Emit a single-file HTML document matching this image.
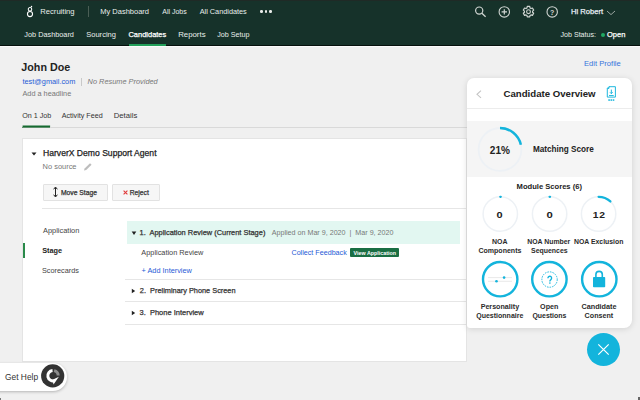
<!DOCTYPE html>
<html><head><meta charset="utf-8"><style>
html,body{margin:0;padding:0;width:640px;height:400px;overflow:hidden;background:#efefef}
body{position:relative;font-family:"Liberation Sans", sans-serif}
.t{position:absolute;white-space:nowrap;line-height:1}
.r{position:absolute;display:block}
</style></head><body>
<div class="r" style="left:0px;top:0px;width:640px;height:400px;background:#f0f0f0;"></div>
<div class="r" style="left:0px;top:0px;width:640px;height:45px;background:#16322a;"></div>
<div class="r" style="left:0px;top:0px;width:640px;height:1px;background:#1f2a26;"></div>
<div class="r" style="left:0px;top:45px;width:640px;height:1px;background:#06110d;"></div>
<div class="r" style="left:0px;top:46px;width:640px;height:1px;background:#fbfbfb;"></div>
<svg class="r" style="left:22px;top:3px" width="16" height="16" viewBox="22 3 16 16"><circle cx="30" cy="14.1" r="2.55" fill="none" stroke="#fff" stroke-width="1.1"/><circle cx="30" cy="9.3" r="1.75" fill="none" stroke="#fff" stroke-width="1.05"/><circle cx="31.5" cy="6.5" r="0.75" fill="#fff"/></svg>
<div class="t" id="t1" style="left:40.36px;top:7.91px;font-size:7.605px;font-weight:400;color:#e9eeeb;font-style:normal;letter-spacing:0px;">Recruiting</div>
<div class="r" style="left:88px;top:6px;width:1px;height:11px;background:#4a5e55;"></div>
<div class="t" id="t2" style="left:100.24px;top:8.01px;font-size:7.508px;font-weight:400;color:#e9eeeb;font-style:normal;letter-spacing:0px;">My Dashboard</div>
<div class="t" id="t3" style="left:162.23px;top:7.71px;font-size:6.997px;font-weight:400;color:#e9eeeb;font-style:normal;letter-spacing:0px;">All Jobs</div>
<div class="t" id="t4" style="left:199.70px;top:7.84px;font-size:7.311px;font-weight:400;color:#e9eeeb;font-style:normal;letter-spacing:0px;">All Candidates</div>
<div class="r" style="left:260.3px;top:10.3px;width:2.4px;height:2.4px;border-radius:50%;background:#e8ece9"></div>
<div class="r" style="left:264.8px;top:10.3px;width:2.4px;height:2.4px;border-radius:50%;background:#e8ece9"></div>
<div class="r" style="left:269.3px;top:10.3px;width:2.4px;height:2.4px;border-radius:50%;background:#e8ece9"></div>
<div class="t" id="t5" style="left:24.34px;top:30.62px;font-size:7.324px;font-weight:400;color:#e9eeeb;font-style:normal;letter-spacing:0px;">Job Dashboard</div>
<div class="t" id="t6" style="left:86.25px;top:30.61px;font-size:7.523px;font-weight:400;color:#e9eeeb;font-style:normal;letter-spacing:0px;">Sourcing</div>
<div class="t" id="t7" style="left:128.47px;top:30.66px;font-size:7.483px;font-weight:400;color:#ffffff;font-style:normal;letter-spacing:0px;-webkit-text-stroke:0.25px currentColor;">Candidates</div>
<div class="r" style="left:129px;top:44px;width:37px;height:2px;background:#22a05a;"></div>
<div class="t" id="t8" style="left:178.17px;top:30.52px;font-size:7.837px;font-weight:400;color:#e9eeeb;font-style:normal;letter-spacing:0px;">Reports</div>
<div class="t" id="t9" style="left:217.29px;top:31.65px;font-size:7.167px;font-weight:400;color:#e9eeeb;font-style:normal;letter-spacing:0px;">Job Setup</div>
<svg class="r" style="left:470px;top:2px" width="92" height="20" viewBox="470 2 92 20"><circle cx="479.2" cy="10.6" r="3.6" fill="none" stroke="#d0d5d2" stroke-width="1.2"/><path d="M481.9 13.3 L485.6 16.7" stroke="#d0d5d2" stroke-width="1.3"/><circle cx="504.3" cy="11.9" r="5.2" fill="none" stroke="#d0d5d2" stroke-width="1.1"/><path d="M504.3 9.2 V14.6 M501.6 11.9 H507" stroke="#d0d5d2" stroke-width="1.2"/><path d="M526.96 7.90 L527.29 6.44 L529.71 6.44 L530.04 7.90 L531.02 8.47 L532.45 8.02 L533.66 10.12 L532.56 11.13 L532.56 12.27 L533.66 13.28 L532.45 15.38 L531.02 14.93 L530.04 15.50 L529.71 16.96 L527.29 16.96 L526.96 15.50 L525.98 14.93 L524.55 15.38 L523.34 13.28 L524.44 12.27 L524.44 11.13 L523.34 10.12 L524.55 8.02 L525.98 8.47 Z" fill="none" stroke="#d0d5d2" stroke-width="1.2" stroke-linejoin="round"/><circle cx="528.5" cy="11.7" r="1.9" fill="none" stroke="#d0d5d2" stroke-width="1.1"/><circle cx="552.2" cy="11.9" r="5.2" fill="none" stroke="#d0d5d2" stroke-width="1.1"/><text x="552.2" y="14.6" text-anchor="middle" font-family="Liberation Sans" font-size="7" font-weight="700" fill="#d0d5d2">?</text></svg>
<div class="t" id="t10" style="left:571.10px;top:7.60px;font-size:7.576px;font-weight:400;color:#e6edf3;font-style:normal;letter-spacing:0px;-webkit-text-stroke:0.25px currentColor;">Hi Robert</div>
<svg class="r" style="left:606px;top:10px" width="10" height="6" viewBox="0 0 10 6"><path d="M1 1 L5 4.6 L9 1" fill="none" stroke="#9aa5a0" stroke-width="1"/></svg>
<div class="t" id="t11" style="left:560.48px;top:31.54px;font-size:7.119px;font-weight:400;color:#e9eeeb;font-style:normal;letter-spacing:0px;">Job Status:</div>
<div class="r" style="left:600.5px;top:32.6px;width:4px;height:4px;border-radius:50%;background:#1fa862"></div>
<div class="t" id="t12" style="left:607.06px;top:30.67px;font-size:7.499px;font-weight:400;color:#ffffff;font-style:normal;letter-spacing:0px;-webkit-text-stroke:0.25px currentColor;">Open</div>
<div class="t" id="t13" style="left:21.35px;top:62.03px;font-size:10.720px;font-weight:700;color:#222;font-style:normal;letter-spacing:0px;">John Doe</div>
<div class="t" id="t14" style="left:22.47px;top:77.67px;font-size:7.365px;font-weight:400;color:#1f5bd6;font-style:normal;letter-spacing:0px;">test@gmail.com</div>
<div class="r" style="left:81px;top:78px;width:1px;height:8px;background:#c9c9c9;"></div>
<div class="t" id="t15" style="left:87.60px;top:78.38px;font-size:7.393px;font-weight:400;color:#777;font-style:italic;letter-spacing:0px;">No Resume Provided</div>
<div class="t" id="t16" style="left:22.45px;top:90.06px;font-size:7.324px;font-weight:400;color:#777;font-style:normal;letter-spacing:0px;">Add a headline</div>
<div class="t" id="t17" style="left:22.26px;top:112.60px;font-size:7.172px;font-weight:400;color:#333;font-style:normal;letter-spacing:0px;">On 1 Job</div>
<div class="t" id="t18" style="left:61.70px;top:112.69px;font-size:7.167px;font-weight:400;color:#333;font-style:normal;letter-spacing:0px;">Activity Feed</div>
<div class="t" id="t19" style="left:113.77px;top:111.68px;font-size:7.695px;font-weight:400;color:#333;font-style:normal;letter-spacing:0px;">Details</div>
<div class="r" style="left:50px;top:127px;width:417px;height:1px;background:#d9d9d9;"></div>
<div class="r" style="left:22px;top:127px;width:28px;height:1px;background:#5d8f6b;"></div>
<svg class="r" style="left:20px;top:124px" width="34" height="4" viewBox="20 124 34 4"><rect x="22.6" y="125.5" width="27.5" height="1.5" fill="#156b30"/></svg>
<div class="t" id="t20" style="left:583.96px;top:59.58px;font-size:7.626px;font-weight:400;color:#3574dc;font-style:normal;letter-spacing:0px;">Edit Profile</div>
<div class="r" style="left:22px;top:138px;width:445px;height:224px;background:#ffffff;border:1px solid #e4e4e4;box-sizing:border-box"></div>
<svg class="r" style="left:31px;top:152px" width="6" height="4" viewBox="0 0 6 4"><path d="M0.5 0.5 H5.5 L3 3.5 Z" fill="#222"/></svg>
<div class="t" id="t21" style="left:43.04px;top:148.93px;font-size:8.587px;font-weight:400;color:#222;font-style:normal;letter-spacing:0px;-webkit-text-stroke:0.25px currentColor;">HarverX Demo Support Agent</div>
<div class="t" id="t22" style="left:42.61px;top:162.53px;font-size:7.451px;font-weight:400;color:#777;font-style:normal;letter-spacing:0px;">No source</div>
<svg class="r" style="left:82px;top:162px" width="11" height="10" viewBox="0 0 11 10"><path d="M2 8.5 L2.6 6.6 L8 1.3 L9.6 2.8 L4.2 8 Z" fill="#bdbdbd"/></svg>
<div class="r" style="left:43px;top:184px;width:65px;height:17px;background:#f6f6f6;border:1px solid #e2e2e2;box-sizing:border-box;border-radius:1px"></div>
<svg class="r" style="left:53px;top:186px" width="5" height="12" viewBox="0 0 5 12"><path d="M2.5 1.5 V10.5" stroke="#222" stroke-width="1"/><path d="M0.6 3.3 L2.5 1 L4.4 3.3 M0.6 8.7 L2.5 11 L4.4 8.7" fill="none" stroke="#222" stroke-width="1"/></svg>
<div class="t" id="t23" style="left:60.93px;top:189.90px;font-size:6.758px;font-weight:400;color:#333;font-style:normal;letter-spacing:0px;-webkit-text-stroke:0.25px currentColor;">Move Stage</div>
<div class="r" style="left:112px;top:184px;width:48px;height:17px;background:#f6f6f6;border:1px solid #e2e2e2;box-sizing:border-box;border-radius:1px"></div>
<svg class="r" style="left:122.5px;top:189.5px" width="5" height="5" viewBox="0 0 5 5"><path d="M0.6 0.6 L4.4 4.4 M4.4 0.6 L0.6 4.4" stroke="#e03b3b" stroke-width="1.1"/></svg>
<div class="t" id="t24" style="left:129.78px;top:189.95px;font-size:6.725px;font-weight:400;color:#333;font-style:normal;letter-spacing:0px;-webkit-text-stroke:0.25px currentColor;">Reject</div>
<div class="r" style="left:42px;top:208px;width:424px;height:1px;background:#e6e6e6;"></div>
<div class="t" id="t25" style="left:43.00px;top:226.81px;font-size:7.432px;font-weight:400;color:#444;font-style:normal;letter-spacing:0px;">Application</div>
<div class="r" style="left:23px;top:243px;width:1.6px;height:15px;background:#2a8a4a;"></div>
<div class="t" id="t26" style="left:42.24px;top:246.84px;font-size:7.329px;font-weight:700;color:#222;font-style:normal;letter-spacing:0px;">Stage</div>
<div class="t" id="t27" style="left:41.96px;top:266.58px;font-size:7.319px;font-weight:400;color:#444;font-style:normal;letter-spacing:0px;">Scorecards</div>
<div class="r" style="left:127px;top:221px;width:333px;height:23px;background:#e2f7f1;"></div>
<svg class="r" style="left:131px;top:231px" width="6" height="5" viewBox="0 0 6 5"><path d="M0.7 0.6 H5.3 L3 4 Z" fill="#222"/></svg>
<div class="t" id="t28" style="left:139.54px;top:228.95px;font-size:7.430px;font-weight:400;color:#333;font-style:normal;letter-spacing:0px;-webkit-text-stroke:0.25px currentColor;">1.&nbsp; Application Review (Current Stage)</div>
<div class="t" id="t29" style="left:271.72px;top:229.63px;font-size:7.155px;font-weight:400;color:#777;font-style:normal;letter-spacing:0px;">Applied on Mar 9, 2020 &nbsp;|&nbsp; Mar 9, 2020</div>
<div class="t" id="t30" style="left:141.35px;top:248.67px;font-size:7.354px;font-weight:400;color:#444;font-style:normal;letter-spacing:0px;">Application Review</div>
<div class="t" id="t31" style="left:141.56px;top:266.88px;font-size:7.342px;font-weight:400;color:#1f5bd6;font-style:normal;letter-spacing:0px;">+ Add Interview</div>
<div class="t" id="t32" style="left:291.48px;top:249.93px;font-size:7.160px;font-weight:400;color:#1f5bd6;font-style:normal;letter-spacing:0px;">Collect Feedback</div>
<div class="r" style="left:350px;top:248px;width:49px;height:9px;background:#1a6e43;border-radius:1px"></div>
<div class="t" id="t33" style="left:353.59px;top:250.65px;font-size:5.343px;font-weight:700;color:#ffffff;font-style:normal;letter-spacing:0px;">View Application</div>
<div class="r" style="left:125px;top:279px;width:341px;height:1px;background:#e6e6e6;"></div>
<svg class="r" style="left:131px;top:288px" width="5" height="6" viewBox="0 0 5 6"><path d="M0.8 0.7 V5.3 L4.2 3 Z" fill="#222"/></svg>
<div class="t" id="t34" style="left:139.83px;top:287.39px;font-size:7.370px;font-weight:400;color:#333;font-style:normal;letter-spacing:0px;-webkit-text-stroke:0.25px currentColor;">2.&nbsp; Preliminary Phone Screen</div>
<div class="r" style="left:125px;top:301px;width:341px;height:1px;background:#e6e6e6;"></div>
<svg class="r" style="left:131px;top:310px" width="5" height="6" viewBox="0 0 5 6"><path d="M0.8 0.7 V5.3 L4.2 3 Z" fill="#222"/></svg>
<div class="t" id="t35" style="left:139.55px;top:308.56px;font-size:7.495px;font-weight:400;color:#333;font-style:normal;letter-spacing:0px;-webkit-text-stroke:0.25px currentColor;">3.&nbsp; Phone Interview</div>
<div class="r" style="left:125px;top:324px;width:341px;height:1px;background:#e6e6e6;"></div>
<div class="r" style="left:-20px;top:362.5px;width:87px;height:28px;border-radius:14px;background:#fff;box-shadow:0 1px 3px rgba(0,0,0,.25)"></div>
<div class="t" id="t36" style="left:5.05px;top:372.57px;font-size:8.400px;font-weight:400;color:#333;font-style:normal;letter-spacing:0px;">Get Help</div>
<svg class="r" style="left:40px;top:363px" width="26" height="26" viewBox="0 0 26 26"><circle cx="12.7" cy="12.9" r="12.6" fill="#fff"/><circle cx="12.7" cy="12.9" r="11.6" fill="#333"/><path d="M12.55 7.52 A5.2 5.2 0 1 0 14.78 17.59" fill="none" stroke="#fff" stroke-width="3"/><path d="M14.08 7.61 A5.2 5.2 0 0 1 18.20 12.52" fill="none" stroke="#8c8c8c" stroke-width="3"/><path d="M18.9 13.8 L13.5 21.6 L12.6 16.8 Z" fill="#fff"/></svg>
<div class="r" style="left:467px;top:78px;width:165px;height:249.5px;border-radius:7px 7px 8px 3px;background:#fff;box-shadow:0 1px 6px rgba(0,0,0,.13)"></div>
<div class="r" style="left:467px;top:108px;width:165px;height:1px;background:#ececec;"></div>
<div class="r" style="left:467px;top:120.5px;width:165px;height:56.5px;background:#f5f5f5;"></div>
<svg class="r" style="left:475px;top:89px" width="8" height="10" viewBox="0 0 8 10"><path d="M6 1.7 L2 5.3 L6 8.9" fill="none" stroke="#c4c4c4" stroke-width="1.1"/></svg>
<div class="t" id="t37" style="left:503.52px;top:88.96px;font-size:9.634px;font-weight:700;color:#222;font-style:normal;letter-spacing:0px;">Candidate Overview</div>
<svg class="r" style="left:604px;top:84px" width="14" height="18" viewBox="0 0 14 18"><path d="M5 2.7 H11.4 V13.1 H3.3 V4.4 Z M3.3 4.4 H5 V2.7" fill="none" stroke="#13b4dc" stroke-width="0.95"/><path d="M7.35 5.6 V9.6 M6 8.3 L7.35 9.7 L8.7 8.3" fill="none" stroke="#13b4dc" stroke-width="0.95"/><path d="M5 11.5 H9.7" stroke="#13b4dc" stroke-width="0.9"/><rect x="4.3" y="15.3" width="1.6" height="1.5" fill="#13b4dc"/><rect x="6.5" y="15.3" width="1.7" height="1.5" fill="#13b4dc"/><rect x="8.8" y="15.3" width="1.5" height="1.5" fill="#13b4dc"/></svg>
<svg class="r" style="left:467px;top:115px" width="165" height="70" viewBox="467 115 165 70"><circle cx="500" cy="149.4" r="21.4" fill="none" stroke="#edf1f5" stroke-width="1.8"/><path d="M500 128.0 A21.4 21.4 0 0 1 520.88 144.73" fill="none" stroke="#13b4dc" stroke-width="2.5"/></svg>
<div class="t" id="t38" style="left:489.83px;top:145.54px;font-size:10.061px;font-weight:700;color:#222;font-style:normal;letter-spacing:0px;">21%</div>
<div class="t" id="t39" style="left:532.96px;top:145.91px;font-size:8.185px;font-weight:700;color:#222;font-style:normal;letter-spacing:0px;">Matching Score</div>
<div class="t" id="t40" style="left:516.59px;top:182.84px;font-size:7.608px;font-weight:700;color:#222;font-style:normal;letter-spacing:0px;">Module Scores (6)</div>
<svg class="r" style="left:467px;top:190px" width="165" height="50" viewBox="467 190 165 50"><circle cx="500.3" cy="214" r="17.2" fill="none" stroke="#edf1f5" stroke-width="1.5"/><path d="M500.3 196.8 A17.2 17.2 0 0 1 500.73 196.81" fill="none" stroke="#13b4dc" stroke-width="2.3" stroke-linecap="round"/><circle cx="549.6" cy="214" r="17.2" fill="none" stroke="#edf1f5" stroke-width="1.5"/><path d="M549.6 196.8 A17.2 17.2 0 0 1 550.03 196.81" fill="none" stroke="#13b4dc" stroke-width="2.3" stroke-linecap="round"/><circle cx="598.6" cy="214" r="17.2" fill="none" stroke="#edf1f5" stroke-width="1.5"/><path d="M598.6 196.8 A17.2 17.2 0 0 1 610.37 201.46" fill="none" stroke="#13b4dc" stroke-width="2.3" stroke-linecap="round"/></svg>
<div class="t" id="t41" style="left:496.57px;top:208.81px;font-size:10.974px;font-weight:700;color:#222;font-style:normal;letter-spacing:0px;transform:scaleY(0.760);transform-origin:0 9.29px;">0</div>
<div class="t" id="t42" style="left:546.43px;top:208.50px;font-size:11.338px;font-weight:700;color:#222;font-style:normal;letter-spacing:0px;transform:scaleY(0.760);transform-origin:0 9.60px;">0</div>
<div class="t" id="t43" style="left:592.80px;top:209.98px;font-size:10.363px;font-weight:700;color:#222;font-style:normal;letter-spacing:0.6px;transform:scaleY(0.820);transform-origin:0 8.77px;">12</div>
<div class="t" id="t44" style="left:459.73px;width:80px;text-align:center;top:238.47px;font-size:6.987px;font-weight:700;color:#2b2b2b;">NOA</div>
<div class="t" id="t45" style="left:459.91px;width:80px;text-align:center;top:247.39px;font-size:7.048px;font-weight:700;color:#2b2b2b;">Components</div>
<div class="t" id="t46" style="left:508.78px;width:80px;text-align:center;top:239.11px;font-size:6.923px;font-weight:700;color:#2b2b2b;">NOA Number</div>
<div class="t" id="t47" style="left:509.33px;width:80px;text-align:center;top:248.27px;font-size:6.954px;font-weight:700;color:#2b2b2b;">Sequences</div>
<div class="t" id="t48" style="left:558.73px;width:80px;text-align:center;top:239.15px;font-size:6.890px;font-weight:700;color:#2b2b2b;">NOA Exclusion</div>
<svg class="r" style="left:467px;top:255px" width="165" height="50" viewBox="467 255 165 50"><circle cx="500.2" cy="279.2" r="17.2" fill="none" stroke="#13b4dc" stroke-width="2.4"/><circle cx="549.4" cy="279.2" r="17.2" fill="none" stroke="#13b4dc" stroke-width="2.4"/><circle cx="599.3" cy="279.2" r="17.2" fill="none" stroke="#13b4dc" stroke-width="2.4"/><path d="M488 277.6 H512 M488 281.3 H512" stroke="#e2e2e2" stroke-width="0.8"/><circle cx="504.1" cy="277.6" r="1.3" fill="#13b4dc"/><circle cx="496.5" cy="281.3" r="1.3" fill="#13b4dc"/><circle cx="549.55" cy="279.55" r="7.7" fill="none" stroke="#13b4dc" stroke-width="0.9" stroke-dasharray="1.6 1.0"/><path d="M547.9 278.2 A1.85 1.85 0 1 1 550.9 279.6 Q549.9 280.3 549.9 281.3 V281.6" fill="none" stroke="#13b4dc" stroke-width="1.35"/><circle cx="549.9" cy="283.1" r="0.8" fill="#13b4dc"/><rect x="593" y="276.9" width="12.2" height="10.3" rx="0.8" fill="#13b4dc"/><path d="M595.9 277 V274.6 A3.2 3.2 0 0 1 602.3 274.6 V277" fill="none" stroke="#13b4dc" stroke-width="1.6"/></svg>
<div class="t" id="t49" style="left:459.90px;width:80px;text-align:center;top:303.56px;font-size:7.156px;font-weight:700;color:#2b2b2b;">Personality</div>
<div class="t" id="t50" style="left:459.82px;width:80px;text-align:center;top:312.12px;font-size:7.032px;font-weight:700;color:#2b2b2b;">Questionnaire</div>
<div class="t" id="t51" style="left:509.22px;width:80px;text-align:center;top:303.79px;font-size:7.158px;font-weight:700;color:#2b2b2b;">Open</div>
<div class="t" id="t52" style="left:509.37px;width:80px;text-align:center;top:313.01px;font-size:6.949px;font-weight:700;color:#2b2b2b;">Questions</div>
<div class="t" id="t53" style="left:559.00px;width:80px;text-align:center;top:302.92px;font-size:7.251px;font-weight:700;color:#2b2b2b;">Candidate</div>
<div class="t" id="t54" style="left:558.93px;width:80px;text-align:center;top:312.83px;font-size:7.161px;font-weight:700;color:#2b2b2b;">Consent</div>
<div class="r" style="left:586.8px;top:332.7px;width:33px;height:33px;border-radius:50%;background:#13b4dc"></div>
<svg class="r" style="left:597px;top:342.5px" width="13" height="13" viewBox="0 0 13 13"><path d="M1.3 1.3 L11.7 11.7 M11.7 1.3 L1.3 11.7" stroke="#fff" stroke-width="1.2"/></svg>
<div class="r" style="left:638px;top:397px;width:2px;height:3px;background:#666"></div>
<div class="r" style="left:0px;top:398px;width:1px;height:2px;background:#777"></div>
</body></html>
